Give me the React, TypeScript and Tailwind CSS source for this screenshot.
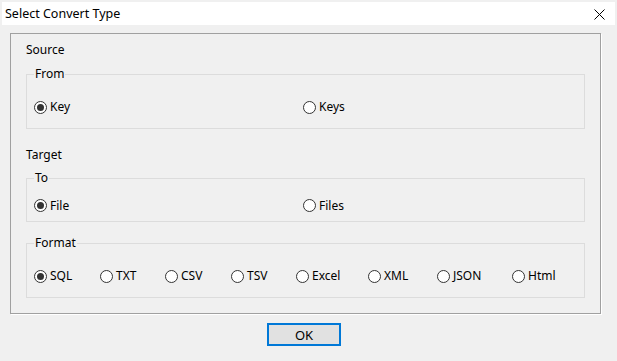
import React from "react";

type Opt = { label: string; w: string; checked?: boolean };

const fromOpts: Opt[] = [
  { label: "Key", w: "w-[269px]", checked: true },
  { label: "Keys", w: "w-[100px]" },
];

const toOpts: Opt[] = [
  { label: "File", w: "w-[269px]", checked: true },
  { label: "Files", w: "w-[100px]" },
];

const formatOpts: Opt[] = [
  { label: "SQL", w: "w-[66px]", checked: true },
  { label: "TXT", w: "w-[65px]" },
  { label: "CSV", w: "w-[66px]" },
  { label: "TSV", w: "w-[65px]" },
  { label: "Excel", w: "w-[72px]" },
  { label: "XML", w: "w-[69px]" },
  { label: "JSON", w: "w-[75px]" },
  { label: "Html", w: "w-[60px]" },
];

function Radio({ opt }: { opt: Opt }) {
  return (
    <div className={`flex items-center gap-[3px] ${opt.w}`}>
      <span className="flex h-[13px] w-[13px] shrink-0 items-center justify-center rounded-full border border-[#333333] bg-white">
        {opt.checked && <span className="h-[7px] w-[7px] rounded-full bg-[#333333]" />}
      </span>
      <span className="leading-[14px]">{opt.label}</span>
    </div>
  );
}

function Group({ title, opts, h }: { title: string; opts: Opt[]; h: string }) {
  return (
    <div className={`relative border border-[#dcdcdc] pl-[7px] pt-[11px] ${h}`}>
      <span className="absolute -top-[8px] left-[7px] bg-[#f0f0f0] px-[1px] leading-[14px]">{title}</span>
      <div className="flex h-full items-center">
        {opts.map((o) => (
          <Radio key={o.label} opt={o} />
        ))}
      </div>
    </div>
  );
}

export default function App() {
  return (
    <div
      className="h-[361px] w-[617px] overflow-hidden bg-[#f0f0f0] pt-[2px] text-[12px] text-black"
      style={{ fontFamily: '"Noto Sans", "Open Sans", sans-serif' }}
    >
      {/* title bar */}
      <div className="mx-[2px] flex h-[23px] items-center justify-between bg-white pl-[3px] pr-[10px]">
        <span className="text-[12.5px] leading-[14px]">Select Convert Type</span>
        <svg width="11" height="11" viewBox="0 0 11 11" className="mt-[1px]">
          <path d="M0.5 0.5 L10.5 10.5 M10.5 0.5 L0.5 10.5" stroke="#000" strokeWidth="1" fill="none" />
        </svg>
      </div>

      {/* main box */}
      <div className="ml-[10px] mt-[8px] h-[281px] w-[591px] border border-[#a0a0a0] px-[15px] pt-[9px] shadow-[1px_1px_0_#ffffff]">
        <div className="leading-[14px]">Source</div>
        <div className="mt-[17px]">
          <Group title="From" opts={fromOpts} h="h-[55px]" />
        </div>
        <div className="mt-[19px] leading-[14px]">Target</div>
        <div className="mt-[16px]">
          <Group title="To" opts={toOpts} h="h-[44px]" />
        </div>
        <div className="mt-[21px]">
          <Group title="Format" opts={formatOpts} h="h-[55px]" />
        </div>
      </div>

      <button className="ml-[267px] mt-[9px] flex h-[23px] w-[74px] items-center justify-center border-2 border-[#0078d7] bg-[#e1e1e1] text-[13px] leading-[14px]">
        OK
      </button>
    </div>
  );
}
